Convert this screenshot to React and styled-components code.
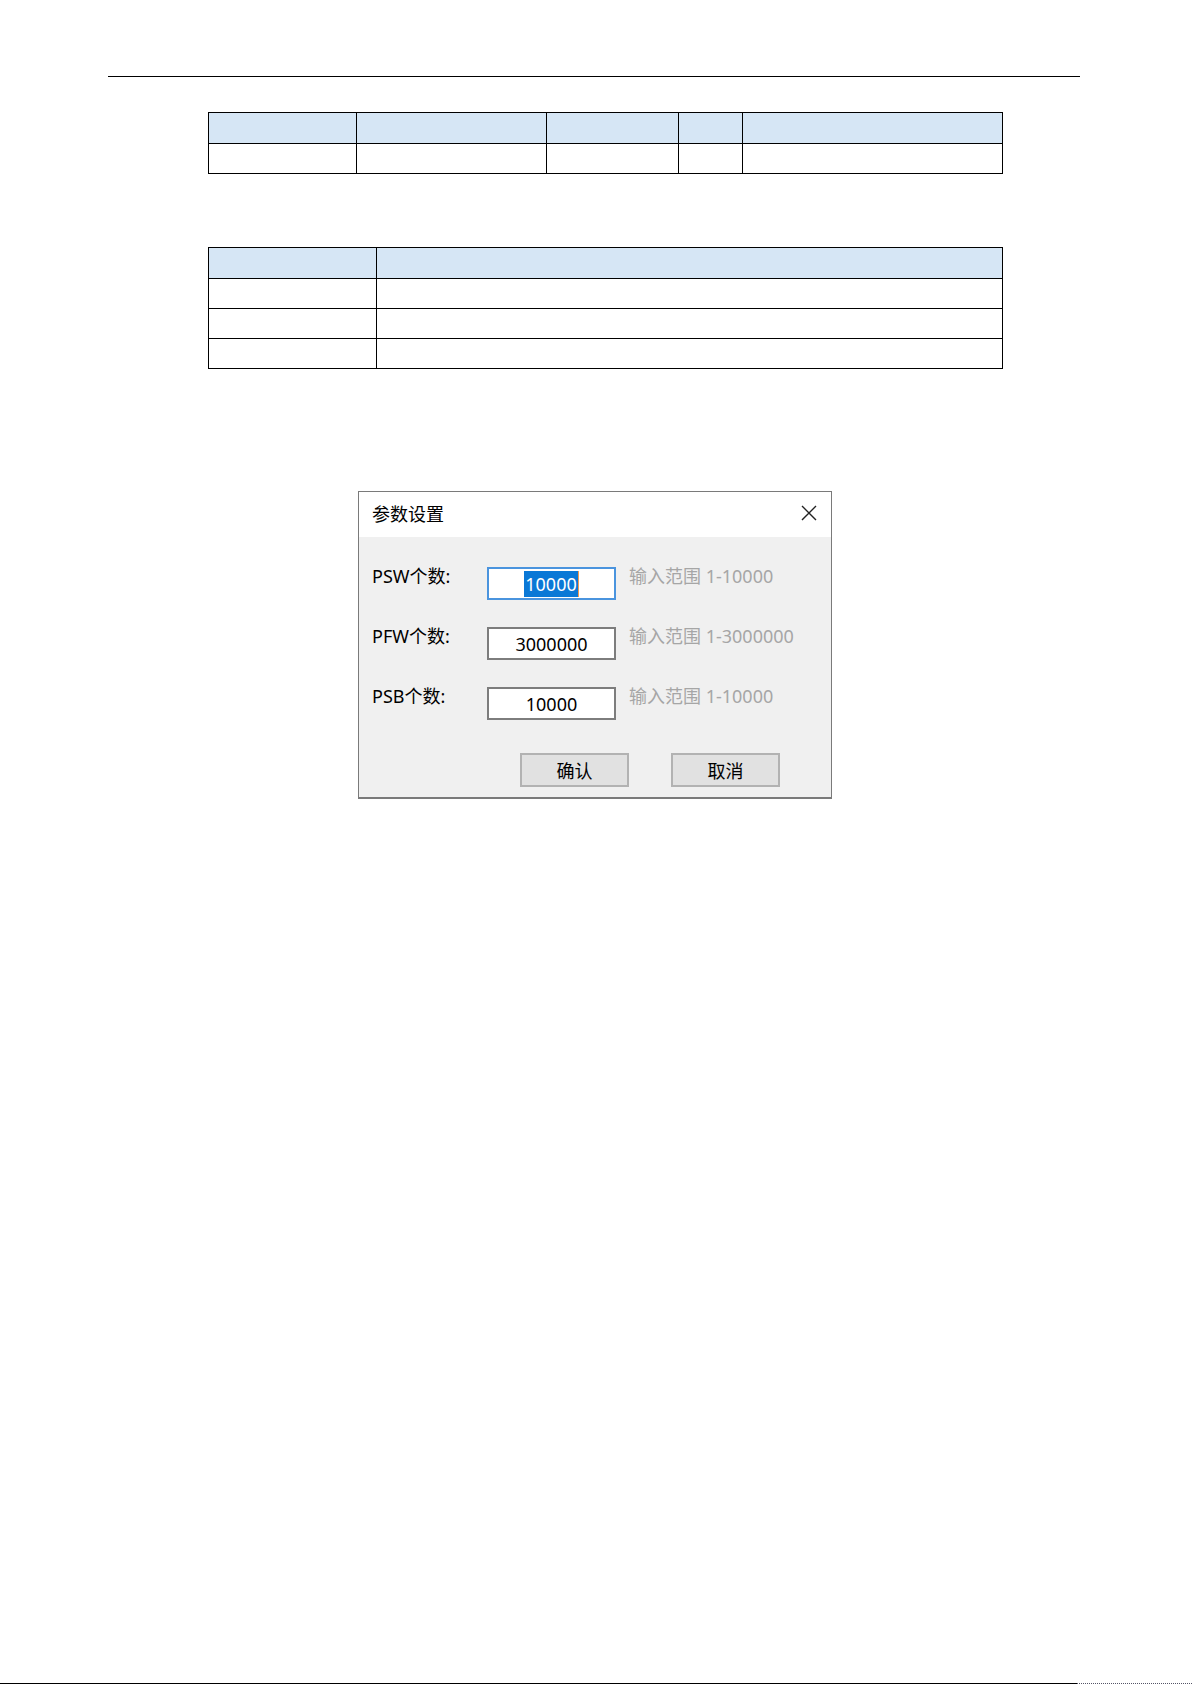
import React from 'react'
import styled, { createGlobalStyle } from 'styled-components'

const GlobalStyle = createGlobalStyle`
    body {
        margin: 0;
        background: #fff;
        font-family: 'Noto Sans', 'Noto Sans CJK SC', sans-serif;
    }
`

const fields = [
    { label: 'PSW个数:', value: '10000', hint: '输入范围 1-10000', focused: true },
    { label: 'PFW个数:', value: '3000000', hint: '输入范围 1-3000000' },
    { label: 'PSB个数:', value: '10000', hint: '输入范围 1-10000' },
]

const App = () => {
    return (
        <Page>
            <GlobalStyle />
            <HeaderRule />

            <GridTable $top={35}>
                <colgroup>
                    <col style={{ width: 148 }} />
                    <col style={{ width: 190 }} />
                    <col style={{ width: 132 }} />
                    <col style={{ width: 64 }} />
                    <col />
                </colgroup>
                <tbody>
                    <Row $head>
                        <Cell />
                        <Cell />
                        <Cell />
                        <Cell />
                        <Cell />
                    </Row>
                    <Row>
                        <Cell />
                        <Cell />
                        <Cell />
                        <Cell />
                        <Cell />
                    </Row>
                </tbody>
            </GridTable>

            <GridTable $top={73}>
                <colgroup>
                    <col style={{ width: 168 }} />
                    <col />
                </colgroup>
                <tbody>
                    <Row $head>
                        <Cell />
                        <Cell />
                    </Row>
                    {[0, 1, 2].map((i) => (
                        <Row key={i}>
                            <Cell />
                            <Cell />
                        </Row>
                    ))}
                </tbody>
            </GridTable>

            <Dialog>
                <TitleBar>
                    <Title>参数设置</Title>
                    <CloseIcon viewBox="0 0 16 16">
                        <path d="M1 1 L15 15 M15 1 L1 15" />
                    </CloseIcon>
                </TitleBar>
                <Body>
                    <Form>
                        {fields.map((f) => (
                            <React.Fragment key={f.label}>
                                <Label>{f.label}</Label>
                                <Input $focused={f.focused}>
                                    {f.focused ? <Selected>{f.value}</Selected> : f.value}
                                </Input>
                                <Hint>{f.hint}</Hint>
                            </React.Fragment>
                        ))}
                    </Form>
                    <Buttons>
                        <Button>确认</Button>
                        <Button>取消</Button>
                    </Buttons>
                </Body>
            </Dialog>

            <FooterRule>
                <Solid />
                <Dotted />
            </FooterRule>
        </Page>
    )
}

const Page = styled.div`
    width: 1192px;
    height: 1685px;
    display: flex;
    flex-direction: column;
    align-items: flex-start;
    overflow: hidden;
`
const HeaderRule = styled.div`
    margin: 76px 0 0 108px;
    width: 972px;
    border-top: 1px solid #000;
`
const GridTable = styled.table`
    margin: ${(p) => p.$top}px 0 0 208px;
    width: 795px;
    border-collapse: collapse;
    table-layout: fixed;
`
const Row = styled.tr`
    height: ${(p) => (p.$head ? 31 : 30)}px;
    background: ${(p) => (p.$head ? '#d6e6f5' : '#fff')};
`
const Cell = styled.td`
    border: 1px solid #000;
    padding: 0;
`
const Dialog = styled.div`
    margin: 122px 0 0 358px;
    width: 474px;
    height: 308px;
    box-sizing: border-box;
    border: 1px solid #7a7a7a;
    border-bottom-width: 2px;
    background: #f0f0f0;
    display: flex;
    flex-direction: column;
    color: #000;
`
const TitleBar = styled.div`
    height: 45px;
    box-sizing: border-box;
    padding: 0 14px 4px 13px;
    background: #fff;
    display: flex;
    align-items: center;
    justify-content: space-between;
`
const Title = styled.span`
    font-size: 18px;
`
const CloseIcon = styled.svg`
    width: 16px;
    height: 16px;
    fill: none;
    stroke: #222;
    stroke-width: 1.4;
`
const Body = styled.div`
    flex: 1;
    display: flex;
    flex-direction: column;
    padding: 30px 0 0 13px;
`
const Form = styled.div`
    display: grid;
    grid-template-columns: 115px 129px 1fr;
    row-gap: 27px;
    align-items: start;
`
const Label = styled.span`
    font-size: 18px;
    line-height: 18px;
`
const Input = styled.div`
    height: 33px;
    box-sizing: border-box;
    border: 2px solid ${(p) => (p.$focused ? '#4a94de' : '#7d7d7d')};
    background: #fff;
    display: flex;
    align-items: center;
    justify-content: center;
    font-size: 18px;
    color: #000;
`
const Selected = styled.span`
    background: #0a78d6;
    color: #fff;
    line-height: 26px;
    padding: 0 1px;
    border-right: 1px solid #f09a50;
`
const Hint = styled.span`
    margin-left: 13px;
    font-size: 18px;
    line-height: 18px;
    color: #a6a6a6;
    white-space: nowrap;
`
const Buttons = styled.div`
    margin-top: 33px;
    display: flex;
    justify-content: flex-end;
    gap: 42px;
    padding-right: 51px;
`
const Button = styled.button`
    width: 109px;
    height: 34px;
    box-sizing: border-box;
    border: 2px solid #b2b2b2;
    background: #e1e1e1;
    font-family: 'Noto Sans', 'Noto Sans CJK SC', sans-serif;
    font-size: 18px;
    color: #000;
    padding: 0;
`
const FooterRule = styled.div`
    margin-top: auto;
    margin-bottom: 1px;
    width: 100%;
    display: flex;
`
const Solid = styled.div`
    width: 1077px;
    border-top: 1px solid #000;
`
const Dotted = styled.div`
    flex: 1;
    border-top: 1px dotted #556;
`

export default App
